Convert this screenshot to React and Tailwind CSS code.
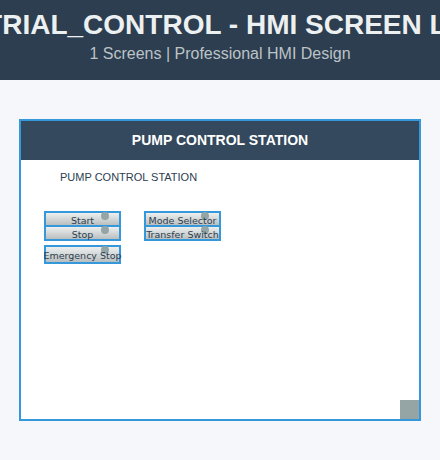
import React from 'react';

const controls = [
    { label: 'Start', left: 'left-[23px]', top: 'top-[51px]', h: 'h-[16px]' },
    { label: 'Stop', left: 'left-[23px]', top: 'top-[65px]', h: 'h-[16px]' },
    { label: 'Emergency Stop', left: 'left-[23px]', top: 'top-[85px]', h: 'h-[19px]' },
    { label: 'Mode Selector', left: 'left-[123px]', top: 'top-[51px]', h: 'h-[16px]' },
    { label: 'Transfer Switch', left: 'left-[123px]', top: 'top-[65px]', h: 'h-[16px]' },
];

const HmiButton = ({ label, left, top, h }) => (
    <div
        className={`absolute ${left} ${top} ${h} w-[77px] border-2 border-[#3498db] bg-gradient-to-b from-[#eef0f0] to-[#b9bebe] flex items-center justify-center pt-[3px]`}
    >
        <span className="absolute -top-[1px] right-[10px] w-[8px] h-[8px] rounded-full bg-[#95a5a6]" />
        <span className="relative text-[9.5px] leading-none text-[#2c3e50] whitespace-nowrap font-['DejaVu_Sans',sans-serif]">
            {label}
        </span>
    </div>
);

const App = () => {
    return (
        <div className="w-[440px] h-[460px] bg-[#f5f7fa] overflow-hidden font-['Liberation_Sans',Arial,sans-serif]">
            {/* Page Header */}
            <div className="h-[80px] bg-[#2c3e50] flex flex-col items-center overflow-hidden">
                <div className="w-full flex justify-center mt-[7px]">
                    <h1 className="text-[28px] leading-[36px] font-bold text-[#ecf0f1] whitespace-nowrap shrink-0">
                        INDUSTRIAL_CONTROL - HMI SCREEN LAYOUT
                    </h1>
                </div>
                <p className="text-[16px] leading-[20px] text-[#bdc3c7] mt-[1px]">1 Screens | Professional HMI Design</p>
            </div>

            {/* Screen Panel */}
            <div className="ml-[19px] mt-[39px] w-[402px] h-[302px] border-2 border-[#3498db] bg-white flex flex-col">
                <div className="h-[39px] bg-[#34495e] flex items-center justify-center">
                    <h2 className="text-[14px] font-bold text-white">PUMP CONTROL STATION</h2>
                </div>
                <div className="relative flex-1">
                    <p className="absolute left-[39px] top-[11px] text-[11px] leading-[13px] text-[#2c3e50]">
                        PUMP CONTROL STATION
                    </p>
                    {controls.map((c) => (
                        <HmiButton key={c.label} {...c} />
                    ))}
                    <div className="absolute right-0 bottom-0 w-[19px] h-[19px] bg-[#95a5a6]" />
                </div>
            </div>
        </div>
    );
};

export default App;
